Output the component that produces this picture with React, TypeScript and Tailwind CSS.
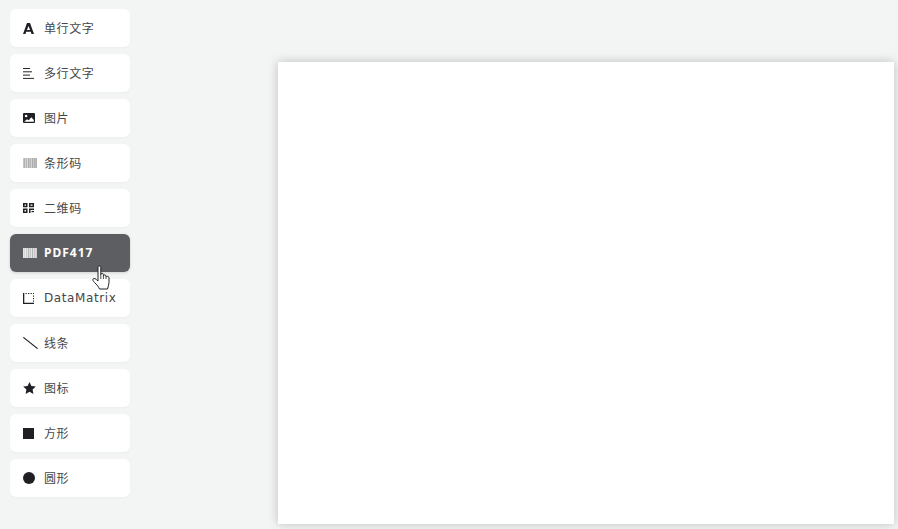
import React from 'react'

const DARK_STRIPES = ['#c6c6c6', '#b2b2b2', '#d0d0d0', '#b8b8b8', '#d8d8d8', '#aeaeae', '#c4c4c4', '#b6b6b6', '#d4d4d4', '#acacac', '#c8c8c8', '#b0b0b0', '#bcbcbc', '#b0b0b0']
const LIGHT_STRIPES = ['#e4e4e4', '#d6d6d6', '#ececec', '#cecece', '#e2e2e2', '#b8b8ba', '#dcdcdc', '#c4c4c6', '#e6e6e6', '#b4b4b6', '#e0e0e0', '#c8c8ca', '#d8d8d8', '#cecece']

const Bars = ({ light }: { light?: boolean }) => (
  <svg width="14" height="10" viewBox="0 0 14 10" className="block" shapeRendering="crispEdges">
    {(light ? LIGHT_STRIPES : DARK_STRIPES).map((c, i) => (
      <rect key={i} x={i} y="0" width="1" height="10" fill={c} />
    ))}
  </svg>
)

const icons: Record<string, React.ReactNode> = {
  text: (
    <svg width="11" height="11" viewBox="0 0 11 11"><path d="M4 0h3l4 11H8.500l-.7-2.200H3.200L2.500 11H0L4 0zm1.500 2.900L3.900 6.900h3.200L5.500 2.900z" fill="#1f2023" /></svg>
  ),
  lines: (
    <svg width="11" height="11" viewBox="0 0 11 11" fill="#26272a"><rect y="0" width="7" height="1" /><rect y="3.300" width="9" height="1" /><rect y="6.600" width="7" height="1" /><rect y="9.900" width="11" height="1" /></svg>
  ),
  image: (
    <svg width="12" height="10" viewBox="0 0 12 10"><rect width="12" height="10" rx="1" fill="#1f2023" /><circle cx="3.100" cy="3" r="1.300" fill="#fff" /><path d="M1.200 8.800 4 6.200l1.800 1.100L8.300 4.300l2.500 2.700v1.800z" fill="#fff" /></svg>
  ),
  barcode: <Bars />,
  qr: (
    <svg width="11" height="10" viewBox="0 0 11 10" fill="#1f2023">
      <path fillRule="evenodd" d="M0 0h4.500v4.200H0zM1.500 1.500v1.200h1.500V1.500zM6 0h5v4.200H6zM7.500 1.500v1.200h2V1.500zM0 5.500h4.500V10H0zM1.500 7v1.500h1.500V7z" />
      <rect x="6" y="5.500" width="5" height="1.500" /><rect x="6" y="7" width="1.500" height="3" /><rect x="8.500" y="8" width="2.500" height="1.200" />
    </svg>
  ),
  pdf: <Bars light />,
  matrix: (
    <svg width="11" height="11" viewBox="0 0 11 11"><path d="M0 0h1.300v9.700H11V11H0z" fill="#1f2023" /><path d="M2.500 0h1.300v1H2.500zM5 0h1.300v1H5zM7.500 0h1.300v1H7.500zM10 0h1v1h-1zM10 2.400h1v1.300h-1zM10 5h1v1.300h-1zM10 7.500h1v1.300h-1z" fill="#1f2023" /></svg>
  ),
  line: (
    <svg width="15" height="12" viewBox="0 0 15 12"><path d="M0.300 0.300 14.700 11.700" stroke="#1f2023" strokeWidth="1.100" fill="none" /></svg>
  ),
  star: (
    <svg width="13" height="12" viewBox="0 0 13 12"><path d="M6.500 0l1.900 4 4.400.5-3.200 3 .8 4.400-3.900-2.100-3.900 2.100.8-4.400L.2 4.500 4.600 4z" fill="#1f2023" /></svg>
  ),
  square: <div className="w-[11px] h-[11px] bg-[#1f2023]" />,
  circle: <div className="w-[12px] h-[12px] rounded-full bg-[#1f2023]" />,
}

const ITEMS = [
  { label: '单行文字', icon: 'text' },
  { label: '多行文字', icon: 'lines' },
  { label: '图片', icon: 'image' },
  { label: '条形码', icon: 'barcode' },
  { label: '二维码', icon: 'qr' },
  { label: 'PDF417', icon: 'pdf', active: true, latin: true },
  { label: 'DataMatrix', icon: 'matrix', latin: true },
  { label: '线条', icon: 'line' },
  { label: '图标', icon: 'star' },
  { label: '方形', icon: 'square' },
  { label: '圆形', icon: 'circle' },
]

export default function App() {
  return (
    <div className="h-[529px] w-[898px] overflow-hidden bg-[#f3f5f5] flex">
      <div className="w-[278px] pl-[10px] pt-[9px] flex flex-col gap-[7px]">
        {ITEMS.map(item => (
          <div
            key={item.label}
            className={`relative w-[120px] h-[38px] rounded-[6px] flex items-center text-[12px] ${
              item.active
                ? "bg-[#5d5e62] text-white font-bold tracking-[1px] font-['Noto_Sans','Noto_Sans_CJK_SC',sans-serif] shadow-[0_1px_3px_rgba(0,0,0,0.15)]"
                : "bg-white text-[#46474a] tracking-[0.6px] font-['DejaVu_Sans','Noto_Sans_CJK_SC',sans-serif] shadow-[0_1px_2px_rgba(0,0,0,0.03)]"
            }`}
          >
            <span className="w-[34px] pl-[12.5px] flex items-center shrink-0">{icons[item.icon]}</span>
            <span className={`whitespace-nowrap ${item.latin ? '' : 'pt-[2px]'}`}>{item.label}</span>
            {item.active && (
              <svg width="18" height="25" viewBox="0 0 18 25" className="absolute left-[82px] top-[31px] z-10">
                <path
                  d="M6 2.200C6 .6 8.800 .6 8.800 2.200V9.500C9 8 11.400 8 11.400 9.700V10.800C11.700 9.500 14 9.500 14 11.200V12C14.400 11 17 11 17 12.800V17.500C17 20 16 21.500 15.500 24H7.500C6.500 21.500 4.500 19.500 2.500 17.500C1 16 .5 15 1 14C1.800 12.800 3.800 13.600 6 16Z"
                  fill="#fff"
                  stroke="#1f2023"
                  strokeWidth="1"
                  strokeLinejoin="round"
                />
                <path d="M8.800 9.500V14M11.400 10.800V14M14 12V14" stroke="#1f2023" strokeWidth="0.8" fill="none" />
              </svg>
            )}
          </div>
        ))}
      </div>
      <div className="mt-[62px] w-[616px] h-[462px] bg-white shadow-[0_0_10px_rgba(0,0,0,0.22)]" />
    </div>
  )
}
